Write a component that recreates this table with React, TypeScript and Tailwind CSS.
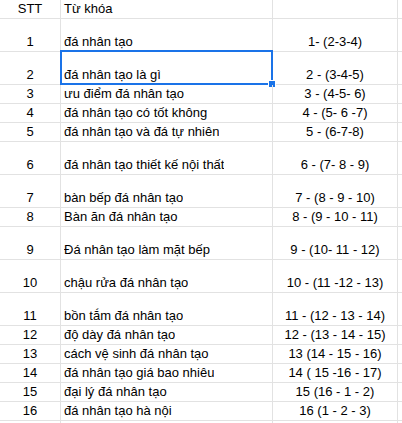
import React from 'react';

type Row = { n: string; kw: string; code: string; tall?: boolean; d?: string };

const rows: Row[] = [
  { n: '1', kw: 'đá nhân tạo', code: '1- (2-3-4)', tall: true, d: 'đ' },
  { n: '2', kw: 'đá nhân tạo là gì', code: '2 - (3-4-5)', tall: true },
  { n: '3', kw: 'ưu điểm đá nhân tạo', code: '3 - (4-5- 6)', d: 'đ' },
  { n: '4', kw: 'đá nhân tạo có tốt không', code: '4 - (5- 6 -7)', d: 'đ' },
  { n: '5', kw: 'đá nhân tạo và đá tự nhiên', code: '5 - (6-7-8)', d: 'đ' },
  { n: '6', kw: 'đá nhân tạo thiết kế nội thất', code: '6 - (7- 8 - 9)', tall: true, d: 'đ' },
  { n: '7', kw: 'bàn bếp đá nhân tạo', code: '7 - (8 - 9 - 10)', tall: true },
  { n: '8', kw: 'Bàn ăn đá nhân tạo', code: '8 - (9 - 10 - 11)', d: 'B' },
  { n: '9', kw: 'Đá nhân tạo làm mặt bếp', code: '9 - (10- 11 - 12)', tall: true },
  { n: '10', kw: 'chậu rửa đá nhân tạo', code: '10 - (11 -12 - 13)', tall: true },
  { n: '11', kw: 'bồn tắm đá nhân tạo', code: '11 - (12 - 13 - 14)', tall: true, d: 'đ' },
  { n: '12', kw: 'độ dày đá nhân tạo', code: '12 - (13 - 14 - 15)', d: 'đ' },
  { n: '13', kw: 'cách vệ sinh đá nhân tạo', code: '13 (14 - 15 - 16)', d: 'đ' },
  { n: '14', kw: 'đá nhân tạo giá bao nhiêu', code: '14 ( 15 -16 - 17)', d: 'đ' },
  { n: '15', kw: 'đại lý đá nhân tạo', code: '15 (16 - 1 - 2)' },
  { n: '16', kw: 'đá nhân tạo hà nội', code: '16 (1 - 2 - 3)', d: 'đ' },
  { n: '', kw: '', code: '' },
];

const cell = 'flex items-end pb-px leading-[16px] whitespace-pre border-r border-[#e2e2e2] overflow-hidden';

export default function App() {
  return (
    <div
      className="w-[402px] h-[423px] overflow-hidden bg-white text-[13px] text-black"
      style={{ fontFamily: '"Liberation Sans", Arial, sans-serif' }}
    >
      {/* header */}
      <div className="flex h-[19px] border-b border-[#e2e2e2]">
        <div className={`${cell} w-[61px] justify-center`}>STT</div>
        <div className={`${cell} w-[212px] pl-[3px]`}>Từ khóa</div>
        <div className={`${cell} w-[125px]`}></div>
        <div className="flex-1"></div>
      </div>

      {rows.map((r, i) => (
        <div
          key={i}
          className={`flex shrink-0 border-b border-[#e2e2e2] ${r.tall ? 'h-[33px]' : 'h-[19px]'}`}
        >
          <div className={`${cell} w-[61px] justify-center`}>{r.n}</div>
          <div className={`${cell} relative w-[212px] pl-[3px] !overflow-visible`}>
            <span className="overflow-hidden">{r.kw}</span>
            {i === 1 && (
              <div className="absolute -left-px -top-[2px] -right-px -bottom-px border-2 border-[#1a73e8]">
                <div className="absolute -right-[4px] -bottom-[4px] w-[6px] h-[6px] bg-[#1a73e8] outline outline-1 outline-white" />
              </div>
            )}
          </div>
          <div className={`${cell} w-[125px] justify-center`}>{r.code}</div>
          <div className="flex flex-1 items-end pb-px pl-[4px] leading-[16px] overflow-hidden whitespace-pre text-[#e0a040]">{r.d}</div>
        </div>
      ))}
    </div>
  );
}
